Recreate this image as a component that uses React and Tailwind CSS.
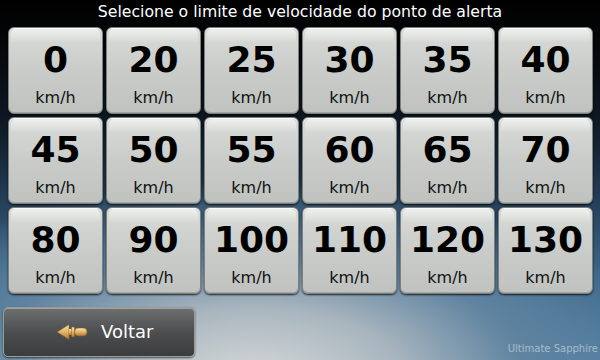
import React from 'react';

const speeds = [0, 20, 25, 30, 35, 40, 45, 50, 55, 60, 65, 70, 80, 90, 100, 110, 120, 130];

function SpeedButton({ value }) {
  return (
    <button className="relative flex h-[87px] flex-col items-center rounded-[6px] border border-[#7d817e] bg-gradient-to-b from-[#d9dbd9] via-[#c9ccc9] to-[#bfc2bf] shadow-[0_1px_2px_rgba(0,0,0,0.8),inset_0_1px_0_rgba(255,255,255,0.9),inset_0_-1px_0_rgba(0,0,0,0.15)]">
      <div className="absolute inset-x-[2px] top-[1px] h-[14px] rounded-t-[5px] bg-gradient-to-b from-[#eef0ee] to-transparent" />
      <span className="relative mt-[12px] text-[36px] font-bold leading-[40px] text-black">{value}</span>
      <span className="relative mt-[9px] text-[16px] leading-[18px] text-[#111]">km/h</span>
    </button>
  );
}

function ArrowIcon() {
  return (
    <svg width="32" height="18" viewBox="0 0 32 18">
      <defs>
        <linearGradient id="ag" x1="0" y1="0" x2="0" y2="1">
          <stop offset="0" stopColor="#f8e3b0" />
          <stop offset="0.5" stopColor="#e2b568" />
          <stop offset="1" stopColor="#b07a30" />
        </linearGradient>
      </defs>
      <path d="M1 9 L13 1.5 L13 16.5 Z" fill="url(#ag)" stroke="#8a5a20" strokeWidth="0.6" />
      <rect x="13" y="6" width="3" height="6" fill="url(#ag)" />
      <rect x="15.5" y="4" width="3" height="10" rx="1" fill="url(#ag)" stroke="#8a5a20" strokeWidth="0.5" />
      <rect x="18.5" y="5" width="12.5" height="8" rx="4" fill="url(#ag)" stroke="#8a5a20" strokeWidth="0.5" />
    </svg>
  );
}

export default function App() {
  return (
    <div
      className="relative flex h-[360px] w-[600px] flex-col overflow-hidden bg-[radial-gradient(ellipse_70%_55%_at_42%_105%,#d6d9d8_0%,#a9b6bf_35%,#5f83a0_65%,rgba(40,70,100,0)_100%),linear-gradient(to_bottom,#000000_0%,#05080c_15%,#0f1a26_35%,#233d57_55%,#3a6588_75%,#4f7ea3_100%)]"
      style={{ fontFamily: '"DejaVu Sans", Verdana, sans-serif' }}
    >
      <div className="h-[27px] pt-[2px] text-center text-[15.7px] leading-[20px] text-white">
        Selecione o limite de velocidade do ponto de alerta
      </div>

      <div className="grid grid-cols-6 gap-[3px] pl-[8px] pr-[7px]">
        {speeds.map((s) => (
          <SpeedButton key={s} value={s} />
        ))}
      </div>

      <div className="mt-[13px] flex items-end justify-between">
        <button className="ml-[3px] flex h-[50px] w-[192px] items-center rounded-[5px] border border-[#9a9c9c] bg-gradient-to-b from-[#6e7070] via-[#4c4e4f] to-[#3a3c3d] shadow-[inset_0_1px_0_rgba(255,255,255,0.35),0_1px_2px_rgba(0,0,0,0.6)]">
          <span className="ml-[52px]">
            <ArrowIcon />
          </span>
          <span className="ml-[13px] text-[18px] leading-[24px] text-white">Voltar</span>
        </button>
        <span className="mb-[1px] mr-[2px] text-[10px] leading-[14px] text-[#a9bccb]">Ultimate Sapphire</span>
      </div>
    </div>
  );
}
